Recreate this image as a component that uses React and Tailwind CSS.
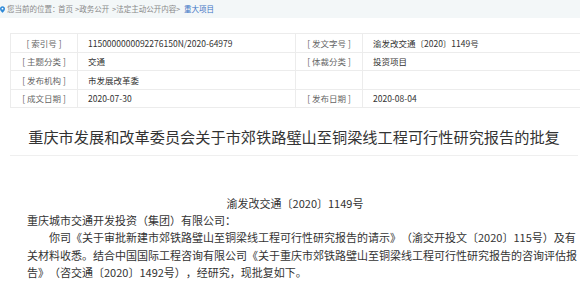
import React from "react";

const rows = [
  ["[ 索引号 ]", "1150000000092276150N/2020-64979", "[ 发文字号 ]", "渝发改交通〔2020〕1149号"],
  ["[ 主题分类 ]", "交通", "[ 体裁分类 ]", "投资项目"],
  ["[ 发布机构 ]", "市发展改革委", "", ""],
  ["[ 成文日期 ]", "2020-07-30", "[ 发布日期 ]", "2020-08-04"],
];

export default function App() {
  return (
    <div
      className="w-[580px] h-[281px] overflow-hidden bg-white text-[#333]"
      style={{ fontFamily: '"Noto Sans CJK SC", "Noto Sans", sans-serif' }}
    >
      <div className="h-[18px] bg-[#f3f7f8] flex items-center text-[7.5px] text-[#8a8a8a] whitespace-nowrap">
        <div className="w-[7px] shrink-0 flex items-center">
          <svg width="5" height="7" viewBox="0 0 6 8">
            <path d="M3 0C1.3 0 0 1.3 0 3c0 2.2 3 5 3 5s3-2.8 3-5C6 1.3 4.7 0 3 0z" fill="#2f8ad8" />
            <circle cx="3" cy="3" r="1.1" fill="#fff" />
          </svg>
        </div>
        <span className="w-[51px] shrink-0">您当前的位置：</span>
        <span className="w-[17px] shrink-0">首页</span>
        <span className="w-[37px] shrink-0">&gt;政务公开</span>
        <span className="w-[64px] shrink-0">&gt;法定主动公开内容</span>
        <span className="w-[8px] shrink-0">&gt;</span>
        <span className="text-[#3b73c4]">重大项目</span>
      </div>

      <div className="pl-[10px] pt-[15px]">
        <div className="w-[600px] border-t border-l border-[#ececec]">
          {rows.map((r, i) => (
            <div key={i} className="flex h-[18.5px] border-b border-[#ececec] text-[8.5px] leading-none">
              <div className="w-[67px] shrink-0 border-r border-[#ececec] flex items-center justify-center text-[#666] whitespace-pre">
                {r[0]}
              </div>
              <div className="w-[218px] shrink-0 border-r border-[#ececec] flex items-center pl-[10px] whitespace-nowrap">
                {r[1]}
              </div>
              <div className="w-[67px] shrink-0 border-r border-[#ececec] flex items-center justify-center text-[#666] whitespace-pre">
                {r[2]}
              </div>
              <div className="flex-1 flex items-center pl-[10px] whitespace-nowrap">{r[3]}</div>
            </div>
          ))}
        </div>
      </div>

      <div className="mx-[10px] w-[568px] h-[48px] border-b border-[#efefef] flex items-center justify-center pt-[10px]">
        <h1 className="text-[15.2px] leading-none text-[#333] whitespace-nowrap">
          重庆市发展和改革委员会关于市郊铁路璧山至铜梁线工程可行性研究报告的批复
        </h1>
      </div>

      <div className="pl-[27px] pt-[39px] text-[11px] leading-[17.6px] whitespace-nowrap [text-spacing-trim:space-all]">
        <div className="w-[536px] text-center">渝发改交通〔2020〕1149号</div>
        <div className="mt-[-1px]">重庆城市交通开发投资（集团）有限公司：</div>
        <div className="pl-[22px]">
          你司《关于审批新建市郊铁路璧山至铜梁线工程可行性研究报告的请示》（渝交开投文〔2020〕115号）及有
        </div>
        <div>关材料收悉。结合中国国际工程咨询有限公司《关于重庆市郊铁路璧山至铜梁线工程可行性研究报告的咨询评估报</div>
        <div>告》（咨交通〔2020〕1492号），经研究，现批复如下。</div>
      </div>
    </div>
  );
}
